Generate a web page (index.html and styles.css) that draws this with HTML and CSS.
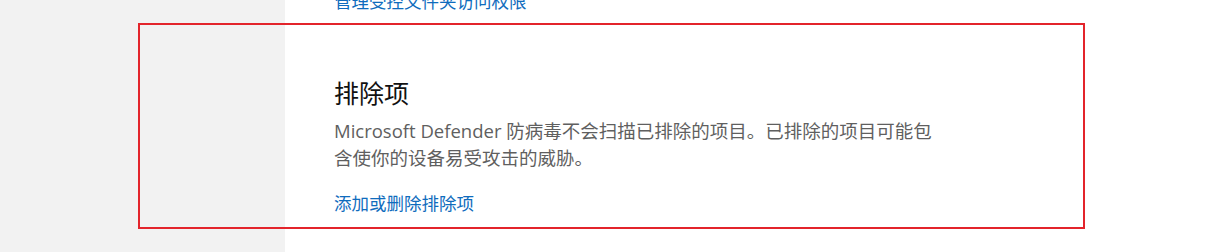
FILE: index.html
```html
<!DOCTYPE html>
<html lang="zh-CN">
<head>
<meta charset="utf-8">
<title>排除项</title>
<link rel="stylesheet" href="styles.css">
</head>
<body>
<div class="page">
  <aside class="sidebar"></aside>
  <main class="content">
    <a class="link link-top" href="#">管理受控文件夹访问权限</a>
    <section class="section">
      <h2 class="title">排除项</h2>
      <p class="desc">Microsoft Defender 防病毒不会扫描已排除的项目。已排除的项目可能包含使你的设备易受攻击的威胁。</p>
      <a class="link" href="#">添加或删除排除项</a>
    </section>
  </main>
  <div class="highlight"></div>
</div>
</body>
</html>
```

FILE: styles.css
```css
html, body {
  margin: 0;
  padding: 0;
  background: #ffffff;
}
body {
  font-family: "Segoe UI", "Open Sans", "Noto Sans CJK SC", sans-serif;
  overflow: hidden;
}
.page {
  position: relative;
  display: flex;
  width: 1206px;
  height: 252px;
  overflow: hidden;
}
.sidebar {
  width: 285px;
  flex: none;
  background: #f2f2f2;
}
.content {
  flex: 1;
  padding-left: 49px;
  display: flex;
  flex-direction: column;
  align-items: flex-start;
}
.link {
  display: block;
  font-family: "Noto Sans CJK SC", sans-serif;
  font-size: 17.5px;
  line-height: 24px;
  color: #0f6cbd;
  text-decoration: none;
}
.link-top {
  margin-top: -11px;
}
.section {
  display: flex;
  flex-direction: column;
  align-items: flex-start;
  margin-top: 62px;
}
.title {
  margin: 0;
  font-family: "Noto Sans CJK SC", sans-serif;
  font-weight: 400;
  font-size: 25px;
  line-height: 34px;
  color: #111111;
}
.desc {
  margin: 8px 0 20px;
  width: 608px;
  font-family: "Open Sans", "Noto Sans CJK SC", sans-serif;
  font-size: 18.5px;
  line-height: 27px;
  color: #5f5f5f;
}
.highlight {
  position: absolute;
  left: 138px;
  top: 23px;
  width: 943px;
  height: 202px;
  border: 2px solid #e3242b;
  pointer-events: none;
}
```
